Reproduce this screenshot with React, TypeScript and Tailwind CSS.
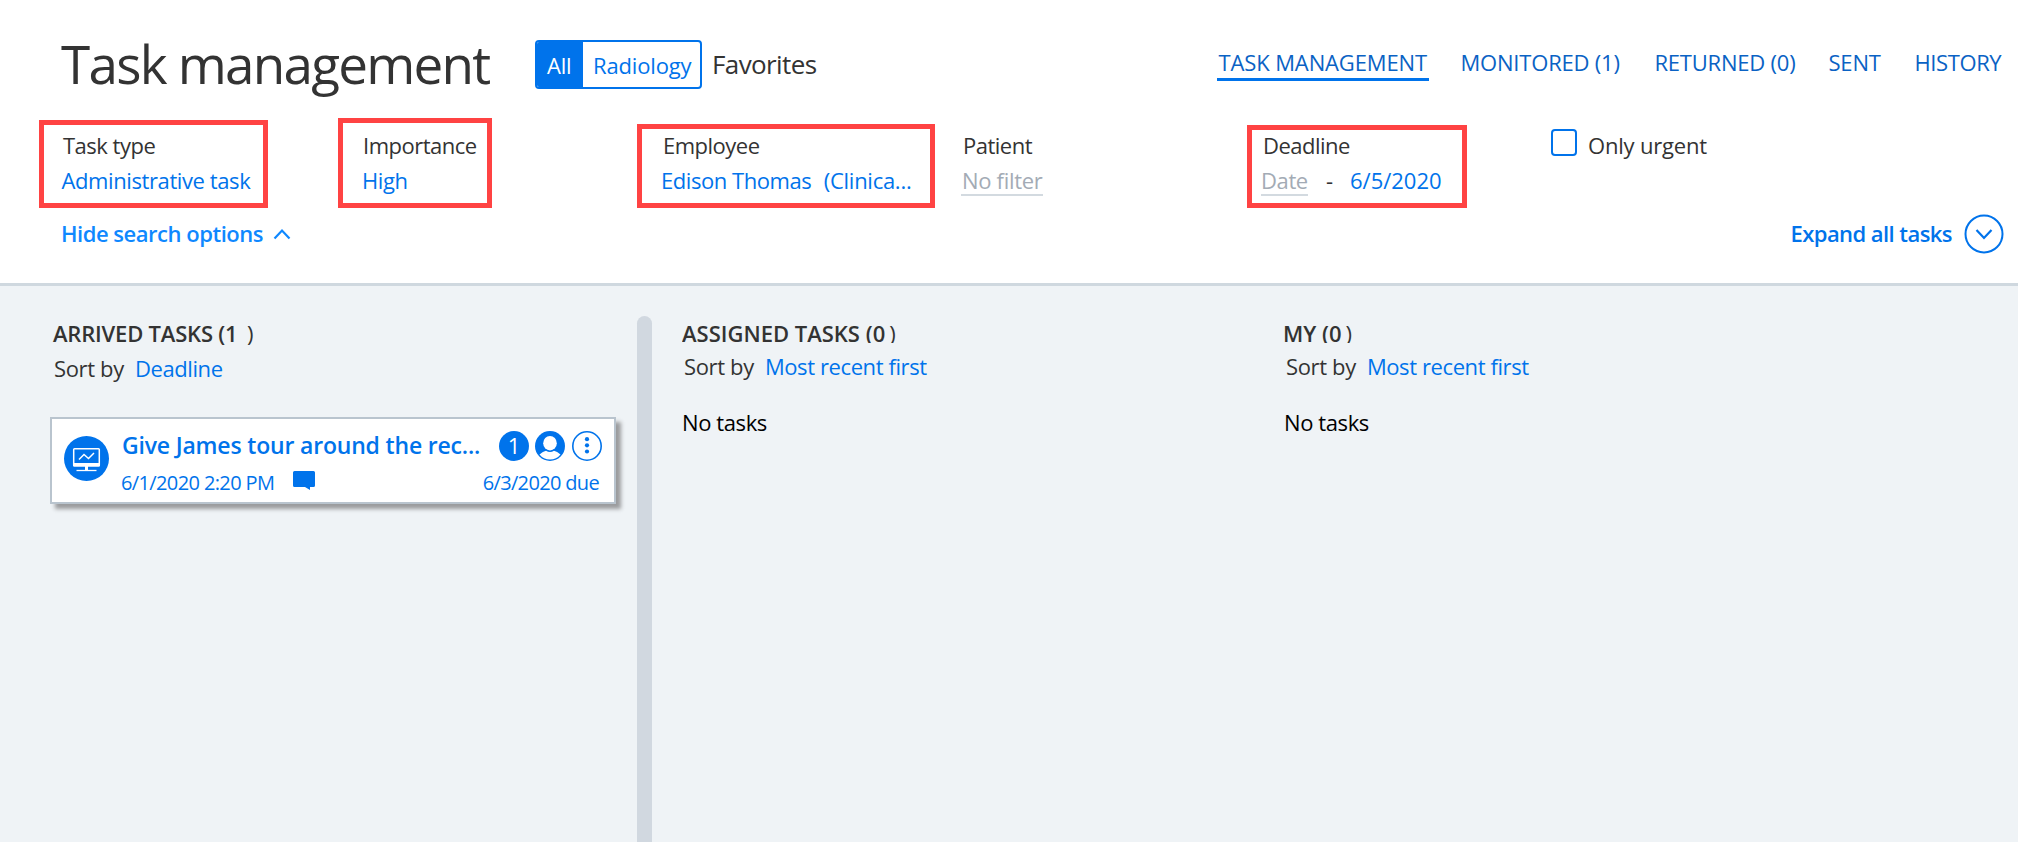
import React from "react";
import clsx from "clsx";

const tabs = [
  { label: "TASK MANAGEMENT", active: true, width: "w-[212px]", text: "pl-[1.5px] tracking-[-0.12px]" },
  { label: "MONITORED (1)", width: "w-[164px]", text: "pl-[1.5px] tracking-[-0.2px]" },
  { label: "RETURNED (0)", width: "w-[144px]", text: "pl-[1.5px] tracking-[-0.22px]" },
  { label: "SENT", width: "w-[56px]", text: "pl-[1.5px] tracking-[-0.2px]" },
  { label: "HISTORY", width: "w-[91px]", text: "pl-[1.5px] tracking-[-0.4px]" },
];

const Frame = ({ className }: { className: string }) => (
  <div className={clsx("absolute border-[5px] border-[#ff4343]", className)} />
);

const Filter = ({
  label,
  frame,
  children,
}: {
  label: string;
  frame?: string;
  children: React.ReactNode;
}) => (
  <div className="relative w-[300px] leading-[35px]">
    {frame && <Frame className={frame} />}
    <div className="pl-[2px] tracking-[-0.5px]">{label}</div>
    <div className="flex whitespace-pre text-[#0073eb]">{children}</div>
  </div>
);

const Empty = ({ children, className }: { children: string; className?: string }) => (
  <span
    className={clsx(
      "mt-[3px] h-[30px] border-b-2 border-[#d3dae0] leading-[29px] text-[#a3abb5]",
      className
    )}
  >
    {children}
  </span>
);

const TaskHeader = () => (
  <header className="h-[286px] border-b-[3px] border-[#cfd8df] bg-white pl-[61px]">
    <div className="flex h-32 items-center">
      <h1 className="w-[474px] text-[53px] leading-[72px] tracking-[-1.75px]">Task management</h1>
      <div className="flex h-[49px] w-[167px] overflow-hidden rounded-[4px] border-2 border-[#0073eb] leading-[46px]">
        <div className="w-[46px] bg-[#0073eb] pl-[10px] tracking-[-0.2px] text-white">All</div>
        <div className="pl-[10px] tracking-[-0.15px] text-[#0073eb]">Radiology</div>
      </div>
      <div className="pl-[10px] text-[26px] tracking-[-0.6px]">Favorites</div>
      <nav className="mr-[14px] ml-auto flex gap-[30px] pb-[3px] text-[#0a62c4]">
        {tabs.map((tab) => (
          <a
            key={tab.label}
            className={clsx(
              "h-[37px] border-b-[3px] leading-[36px] whitespace-nowrap",
              tab.active ? "border-[#0073eb]" : "border-transparent",
              tab.width,
              tab.text
            )}
          >
            {tab.label}
          </a>
        ))}
      </nav>
    </div>

    <div className="flex h-[70px]">
      <Filter label="Task type" frame="-left-[22px] -top-[8px] h-[88px] w-[229px]">
        <span className="pl-[0.5px] tracking-[-0.4px]">Administrative task</span>
      </Filter>
      <Filter label="Importance" frame="-left-[23px] -top-[10px] h-[90px] w-[154px]">
        <span className="pl-[1px] tracking-[-0.4px]">High</span>
      </Filter>
      <Filter label="Employee" frame="-left-[24px] -top-[4px] h-[84px] w-[298px]">
        <span className="tracking-[-0.45px]">{"Edison Thomas  "}</span>
        <span className="pl-[2px] tracking-[-0.27px]">(Clinica...</span>
      </Filter>
      <Filter label="Patient">
        <Empty className="w-[82px] pl-[1px] tracking-[-0.3px]">No filter</Empty>
      </Filter>
      <Filter label="Deadline" frame="-left-[14px] -top-[3px] h-[83px] w-[220px]">
        <Empty className="w-[47px] tracking-[-0.4px]">Date</Empty>
        <span className="w-[42px] pl-[18px] text-[#333]">-</span>
        <span>6/5/2020</span>
      </Filter>
      <label className="flex">
        <span className="-ml-[10px] mt-[1px] h-[27px] w-[26px] rounded-[4px] border-2 border-[#0073eb]" />
        <span className="pl-[11px] leading-[35px] tracking-[-0.2px]">Only urgent</span>
      </label>
    </div>

    <div className="flex h-[71px] items-center pr-[14px] font-semibold">
      <span className="tracking-[-0.48px] text-[#0f88ff]">Hide search options</span>
      <svg className="ml-[10px] h-[12px] w-[18px]" viewBox="0 0 18 12" fill="none" stroke="#0f88ff" strokeWidth="2.2">
        <path d="M1.500 10.500 9 2.500l7.500 8" />
      </svg>
      <span className="mr-[12px] ml-auto tracking-[-0.56px] text-[#0073eb]">Expand all tasks</span>
      <svg className="h-10 w-10" viewBox="0 0 40 40" fill="none" stroke="#0073eb" strokeWidth="2">
        <circle cx="20" cy="20" r="18.500" />
        <path d="m12.500 16 7.500 8 7.500-8" strokeWidth="2.200" />
      </svg>
    </div>
  </header>
);

const SortBy = ({ value }: { value: string }) => (
  <div className="flex gap-[11px] pl-[1px] leading-[30px]">
    <span className="tracking-[-0.35px]">Sort by</span>
    <span className="tracking-[-0.4px] text-[#0073eb]">{value}</span>
  </div>
);

const TaskCard = () => (
  <div className="-ml-[3px] mt-[34px] flex h-[87px] w-[566px] border-2 border-[#b9c4ce] bg-white text-[#0073eb] shadow-[5px_5px_4px_#9b9c9e]">
    <svg className="mt-[17px] ml-[12px] h-[45px] w-[45px] shrink-0" viewBox="0 0 45 45" fill="none" stroke="#fff">
      <circle cx="22.500" cy="22.500" r="22.500" fill="#0073eb" stroke="none" />
      <rect x="9.700" y="12.700" width="25.600" height="17" rx="0.800" strokeWidth="1.500" />
      <path d="M9 27h27v2.500q0 1-1 1H10q-1 0-1-1zM21 30h3v4h-3z" fill="#fff" stroke="none" />
      <path d="M12.500 34.500h20" strokeWidth="1.300" />
      <path d="m15 23.500 5-5 4.500 4 5.500-5.500" strokeWidth="1.500" />
    </svg>
    <div className="flex-1 pr-[12px] pl-[13px]">
      <div className="flex h-[54px] items-center">
        <span className="pb-[2px] text-[23px] font-semibold whitespace-nowrap tracking-[-0.18px]">
          Give James tour around the rec...
        </span>
        <div className="ml-auto flex">
          <span className="h-[30px] w-[30px] rounded-full bg-[#0073eb] text-center leading-[29px] text-white">
            1
          </span>
          <svg className="ml-[6px] h-[30px] w-[30px]" viewBox="0 0 30 30">
            <circle cx="15" cy="15" r="15" fill="#0073eb" />
            <ellipse cx="15" cy="12.200" rx="6.800" ry="7.200" fill="#fff" />
            <path d="M4.500 23.500Q8 20.500 11 19.800q4 2.400 8 0 3 .7 6.500 3.700-4 5-10.500 5t-10.500-5z" fill="#fff" />
          </svg>
          <svg className="ml-[7px] h-[30px] w-[30px]" viewBox="0 0 30 30" fill="#0073eb">
            <circle cx="15" cy="15" r="14.200" fill="none" stroke="#0073eb" strokeWidth="1.600" />
            <circle cx="15" cy="8.200" r="2.100" />
            <circle cx="15" cy="14.300" r="2.100" />
            <circle cx="15" cy="20.500" r="2.100" />
          </svg>
        </div>
      </div>
      <div className="-mt-[1px] -ml-[1px] flex pr-[3px] text-[20px] leading-[22px]">
        <span className="w-[172px] whitespace-nowrap tracking-[-0.62px]">6/1/2020 2:20 PM</span>
        <svg className="-mt-px h-[20px] w-[22px]" viewBox="0 0 22 20" fill="#0073eb">
          <path d="M1.500 0h19Q22 0 22 1.500v13q0 1.500-1.500 1.500H17v3L12 16H1.500Q0 16 0 14.500v-13Q0 0 1.500 0z" />
        </svg>
        <span className="ml-auto tracking-[-0.66px]">6/3/2020 due</span>
      </div>
    </div>
  </div>
);

const App = () => {
  return (
    <div className="flex h-[842px] flex-col overflow-hidden bg-[#eff3f6] font-['Open_Sans',sans-serif] text-[22px] text-[#333]">
      <TaskHeader />
      <main className="flex flex-1">
        <section className="w-[637px] pt-[31px] pl-[53px]">
          <h2 className="h-[36px] leading-[33px] font-semibold tracking-[-0.2px]">
            ARRIVED TASKS (1 <span className="pl-[4px] font-normal">)</span>
          </h2>
          <SortBy value="Deadline" />
          <TaskCard />
        </section>
        <div className="mt-[30px] w-[15px] rounded-t-full bg-[#d1d8e0]" />
        <section className="w-[601px] pt-[38px] pl-[30px]">
          {/* the counter's brackets are cut at the bottom of the heading row */}
          <h2 className="h-[19px] overflow-hidden leading-[19px] font-semibold">
            ASSIGNED TASKS (0<span className="pl-[4px] font-normal">)</span>
          </h2>
          <div className="pt-[8px] pl-[1px]">
            <SortBy value="Most recent first" />
          </div>
          <p className="mt-[25px] leading-[32px] tracking-[-0.4px] text-black">No tasks</p>
        </section>
        <section className="pt-[38px] pl-[30px]">
          <h2 className="h-[19px] overflow-hidden leading-[19px] font-semibold">
            MY (0<span className="pl-[4px] font-normal">)</span>
          </h2>
          <div className="pt-[8px] pl-[2px]">
            <SortBy value="Most recent first" />
          </div>
          <p className="mt-[25px] pl-[1px] leading-[32px] tracking-[-0.4px] text-black">No tasks</p>
        </section>
      </main>
    </div>
  );
};

export default App;
